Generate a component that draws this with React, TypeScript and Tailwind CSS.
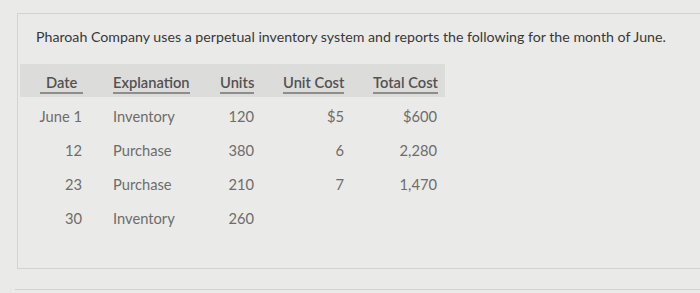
const HEAD = ['Date', 'Explanation', 'Units', 'Unit Cost', 'Total Cost']

const ROWS = [
  { date: 'June 1', expl: 'Inventory', units: '120', cost: '$5', total: '$600' },
  { date: '12', expl: 'Purchase', units: '380', cost: '6', total: '2,280' },
  { date: '23', expl: 'Purchase', units: '210', cost: '7', total: '1,470' },
  { date: '30', expl: 'Inventory', units: '260', cost: '', total: '' },
]

const COLS = 'grid grid-cols-[78px_107px_60px_90px_90px]'

export default function App() {
  return (
    <div className="w-[700px] h-[293px] overflow-hidden bg-[#eaeae8] pt-[13px] pl-[17px] font-['Lato','Noto_Sans',sans-serif]">
      {/* question panel */}
      <div className="w-[700px] h-[256px] border-l border-t border-b border-[#d3d3d1] pl-[18px] pt-[13px]">
        <p className="text-[14.2px] leading-[20px] text-[#383838]">
          Pharoah Company uses a perpetual inventory system and reports the following for the month of June.
        </p>

        <div className="mt-[17px] -ml-[16px] w-[425px]">
          <div className={`${COLS} h-[33px] pt-[3px] bg-[#dcdcda] items-center text-[14.7px] font-semibold text-[#525252]`}>
            <div className="pl-[20px]">
              <span className="inline-block px-[6px] leading-[17px] pb-[1px] border-b-2 border-[#8d8d8b]">{HEAD[0]}</span>
            </div>
            <div className="pl-[15px]">
              <span className="inline-block leading-[17px] pb-[1px] border-b-2 border-[#8d8d8b]">{HEAD[1]}</span>
            </div>
            <div className="pl-[15px]">
              <span className="inline-block leading-[17px] pb-[1px] border-b-2 border-[#8d8d8b]">{HEAD[2]}</span>
            </div>
            <div className="pl-[18px]">
              <span className="inline-block leading-[17px] pb-[1px] border-b-2 border-[#8d8d8b]">{HEAD[3]}</span>
            </div>
            <div className="pl-[18px]">
              <span className="inline-block leading-[17px] pb-[1px] border-b-2 border-[#8d8d8b]">{HEAD[4]}</span>
            </div>
          </div>

          <div className="mt-[2px] text-[14.7px] text-[#6d6d6b]">
            {ROWS.map((r, i) => (
              <div key={i} className={`${COLS} h-[34px] items-center`}>
                <div className="text-right pr-[16px]">{r.date}</div>
                <div className="pl-[15px]">{r.expl}</div>
                <div className="text-right pr-[11px]">{r.units}</div>
                <div className="text-right pr-[11px]">{r.cost}</div>
                <div className="text-right pr-[8px]">{r.total}</div>
              </div>
            ))}
          </div>
        </div>
      </div>
      <div className="mt-[20px] -ml-[2px] w-[700px] border-t border-[#d3d3d1]" />
    </div>
  )
}
